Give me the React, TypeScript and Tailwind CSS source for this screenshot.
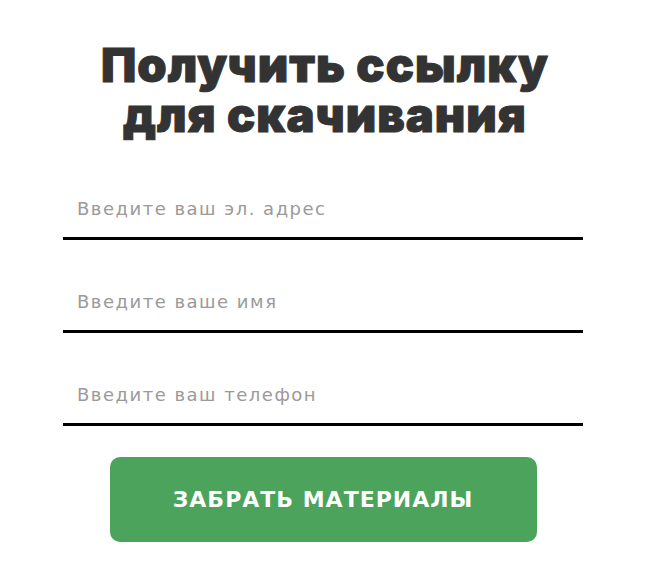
import React from "react";

const fields = [
  { name: "email", type: "email", placeholder: "Введите ваш эл. адрес" },
  { name: "name", type: "text", placeholder: "Введите ваше имя" },
  { name: "phone", type: "tel", placeholder: "Введите ваш телефон" },
];

export default function App() {
  return (
    <div className="min-h-screen bg-white font-['Inter',sans-serif]">
      <div className="mx-auto w-[520px] pt-[40px]">
        <h2 className="pl-[4px] text-center text-[47px] font-black leading-[50px] tracking-[1px] text-[#333333] [-webkit-text-stroke:1px_#333333]">
          Получить ссылку
          <br />
          для скачивания
        </h2>

        <form className="mt-[37px] flex flex-col gap-[30px]">
          {fields.map((field) => (
            <input
              key={field.name}
              name={field.name}
              type={field.type}
              placeholder={field.placeholder}
              className="h-[63px] w-full border-b-[3px] border-black bg-transparent px-[14px] pt-[3px] font-['DejaVu_Sans',sans-serif] text-[18px] tracking-[1.5px] text-[#333] outline-none placeholder:text-[#9a9a9a]"
            />
          ))}
          <button
            type="button"
            className="mx-auto mt-[1px] h-[85px] w-[427px] rounded-[10px] bg-[#4ba35c] font-['DejaVu_Sans',sans-serif] text-[22px] font-bold tracking-[1px] text-white"
          >
            ЗАБРАТЬ МАТЕРИАЛЫ
          </button>
        </form>
      </div>
    </div>
  );
}
